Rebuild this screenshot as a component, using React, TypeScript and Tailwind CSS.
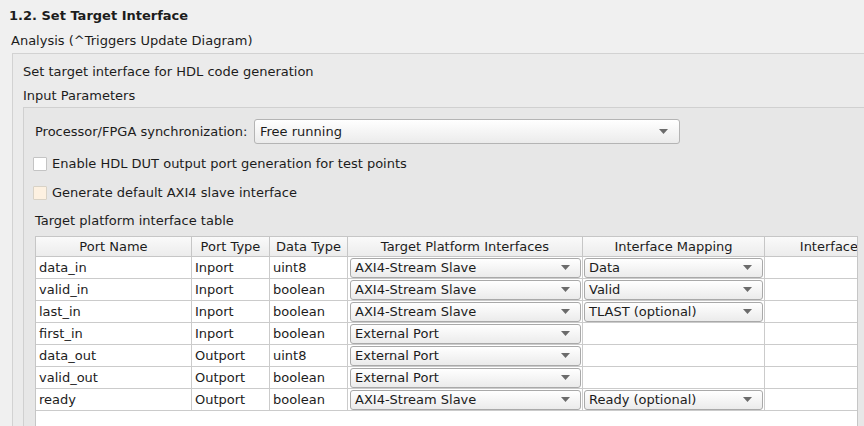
import React from 'react';

const rows = [
  { name: 'data_in', port: 'Inport', type: 'uint8', target: 'AXI4-Stream Slave', map: 'Data' },
  { name: 'valid_in', port: 'Inport', type: 'boolean', target: 'AXI4-Stream Slave', map: 'Valid' },
  { name: 'last_in', port: 'Inport', type: 'boolean', target: 'AXI4-Stream Slave', map: 'TLAST (optional)' },
  { name: 'first_in', port: 'Inport', type: 'boolean', target: 'External Port', map: '' },
  { name: 'data_out', port: 'Outport', type: 'uint8', target: 'External Port', map: '' },
  { name: 'valid_out', port: 'Outport', type: 'boolean', target: 'External Port', map: '' },
  { name: 'ready', port: 'Outport', type: 'boolean', target: 'AXI4-Stream Slave', map: 'Ready (optional)' },
];

function Arrow() {
  return (
    <svg width="9" height="5" viewBox="0 0 9 5" className="shrink-0">
      <path d="M0 0h9L4.5 5z" fill="#6b6b6b" />
    </svg>
  );
}

function Combo({ value, className }: { value: string; className: string }) {
  return (
    <div className={`flex items-center justify-between border border-[#a9a9a9] rounded-[3px] bg-gradient-to-b from-white to-[#ebebeb] pl-[4px] pr-[10px] ${className}`}>
      <span className="whitespace-nowrap">{value}</span>
      <Arrow />
    </div>
  );
}

export default function App() {
  return (
    <div
      className="w-[864px] h-[426px] overflow-hidden bg-[#f0f0f0] text-[13px] text-[#1c1c1c] leading-[18px] flex flex-col"
      style={{ fontFamily: '"DejaVu Sans", sans-serif' }}
    >
      <div className="pl-[9px] pt-[7px] font-bold">1.2. Set Target Interface</div>
      <div className="pl-[11px] pt-[7px]">Analysis (^Triggers Update Diagram)</div>

      {/* outer panel */}
      <div className="ml-[12px] mt-[3px] flex-1 flex flex-col border-t border-l border-[#d2d2d2] bg-[#ebebeb] pl-[10px]">
        <div className="pt-[9px]">Set target interface for HDL code generation</div>
        <div className="pt-[6px]">Input Parameters</div>

        {/* inner panel */}
        <div className="mt-[2px] flex-1 flex flex-col border-t border-l border-[#d0d0d0] bg-[#e7e7e7] pl-[11px]">
          <div className="flex items-center pt-[11px]">
            <span className="w-[219px]">Processor/FPGA synchronization:</span>
            <Combo value="Free running" className="w-[426px] h-[25px] border-[#b4b4b4] pl-[5px] pr-[11px]" />
          </div>

          <div className="flex items-center pt-[11px] -ml-[2px]">
            <div className="w-[14px] h-[14px] border border-[#c4c4c4] bg-white rounded-[1px]" />
            <span className="pl-[5px]">Enable HDL DUT output port generation for test points</span>
          </div>

          <div className="flex items-center pt-[11px] -ml-[2px]">
            <div className="w-[14px] h-[14px] border border-[#d8d2c6] bg-[#fdf1e1] rounded-[1px]" />
            <span className="pl-[5px]">Generate default AXI4 slave interface</span>
          </div>

          <div className="pt-[10px]">Target platform interface table</div>

          {/* table */}
          <div className="mt-[6px] w-[823px] flex-1 bg-white border-t border-l border-r border-[#c6c6c6] overflow-hidden">
            <div className="grid grid-cols-[156px_78px_78px_235px_182px_93px] h-[20px] leading-[20px] border-b border-[#c6c6c6] bg-gradient-to-b from-[#fafafa] to-[#ececec]">
              <div className="border-r border-[#c6c6c6] text-center">Port Name</div>
              <div className="border-r border-[#c6c6c6] text-center">Port Type</div>
              <div className="border-r border-[#c6c6c6] text-center">Data Type</div>
              <div className="border-r border-[#c6c6c6] text-center">Target Platform Interfaces</div>
              <div className="border-r border-[#c6c6c6] text-center">Interface Mapping</div>
              <div className="text-right whitespace-nowrap overflow-hidden">Interface</div>
            </div>
            {rows.map((r) => (
              <div
                key={r.name}
                className="grid grid-cols-[156px_78px_78px_235px_182px_93px] h-[22px] border-b border-[#cbcbcb] items-stretch"
              >
                <div className="border-r border-[#cbcbcb] pl-[3px] flex items-center">{r.name}</div>
                <div className="border-r border-[#cbcbcb] pl-[3px] flex items-center">{r.port}</div>
                <div className="border-r border-[#cbcbcb] pl-[3px] flex items-center">{r.type}</div>
                <div className="border-r border-[#cbcbcb] flex items-center pl-[2px] pr-[1px]">
                  <Combo value={r.target} className="w-full h-[20px]" />
                </div>
                <div className="border-r border-[#cbcbcb] flex items-center pl-[1px] pr-[1px]">
                  {r.map && <Combo value={r.map} className="w-full h-[20px]" />}
                </div>
                <div />
              </div>
            ))}
          </div>
        </div>
      </div>
    </div>
  );
}
